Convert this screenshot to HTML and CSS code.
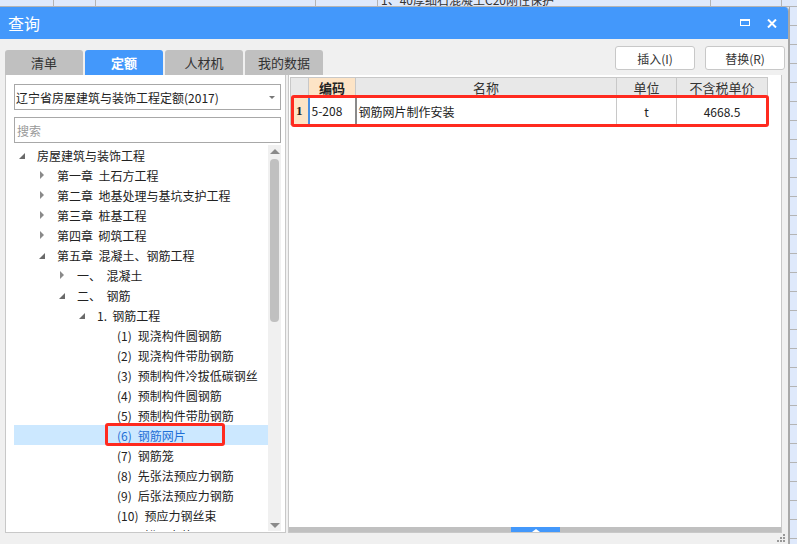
FILE: index.html
```html
<!DOCTYPE html>
<html lang="zh-CN">
<head>
    <meta charset="UTF-8">
    <title>查询</title>
    <link rel="stylesheet" href="styles.css">
</head>
<body>
    <!-- sheet behind the dialog -->
    <div class="sheet-strip">
        <div class="sheet-cell" style="width:54px"></div>
        <div class="sheet-cell" style="width:42px"></div>
        <div class="sheet-cell" style="width:220px"></div>
        <div class="sheet-cell" style="width:62px"></div>
        <div class="sheet-cell sheet-text" style="width:333px">1、40厚细石混凝土C20刚性保护</div>
        <div class="sheet-cell" style="width:71px"></div>
    </div>

    <div class="stage">
        <div class="dialog">
            <div class="titlebar">
                <span class="title">查询</span>
                <div class="title-icons">
                    <span class="ico-max"></span>
                    <svg class="ico-close" width="10" height="9" viewBox="0 0 10 9">
                        <path d="M1 0.5 L9 8.5 M9 0.5 L1 8.5" stroke="#fff" stroke-width="2"/>
                    </svg>
                </div>
            </div>

            <div class="dialog-body">
                <div class="toolbar">
                    <div class="tabs">
                        <div class="tab">清单</div>
                        <div class="tab active">定额</div>
                        <div class="tab">人材机</div>
                        <div class="tab">我的数据</div>
                    </div>
                    <div class="buttons">
                        <button class="btn">插入(I)</button>
                        <button class="btn">替换(R)</button>
                    </div>
                </div>

                <div class="main">
                    <div class="left-panel">
                        <div class="combo">
                            <span>辽宁省房屋建筑与装饰工程定额(2017)</span>
                            <span class="combo-arrow"></span>
                        </div>
                        <div class="search">搜索</div>

                        <div class="tree-wrap">
                            <div class="tree" id="tree"></div>
                            <div class="vscroll">
                                <span class="arr-up"></span>
                                <div class="vthumb"></div>
                                <span class="arr-down"></span>
                            </div>
                        </div>
                    </div>

                    <div class="right-panel">
                        <table class="grid">
                            <thead>
                                <tr>
                                    <th class="rn"></th>
                                    <th class="c-code sel">编码</th>
                                    <th class="c-name">名称</th>
                                    <th class="c-unit">单位</th>
                                    <th class="c-price">不含税单价</th>
                                </tr>
                            </thead>
                            <tbody>
                                <tr>
                                    <td class="rn sel">1</td>
                                    <td class="c-code editing">5-208</td>
                                    <td class="c-name left">钢筋网片制作安装</td>
                                    <td class="c-unit">t</td>
                                    <td class="c-price">4668.5</td>
                                </tr>
                            </tbody>
                        </table>
                        <div class="mark mark-row"></div>

                        <div class="hscroll">
                            <div class="hthumb"><span class="hthumb-arrow"></span></div>
                        </div>
                    </div>
                </div>
            </div>
            <svg class="grip" width="9" height="9" viewBox="0 0 9 9">
                <rect x="6" y="0" width="2" height="2" fill="#999"/>
                <rect x="3" y="3" width="2" height="2" fill="#999"/>
                <rect x="6" y="3" width="2" height="2" fill="#999"/>
                <rect x="0" y="6" width="2" height="2" fill="#999"/>
                <rect x="3" y="6" width="2" height="2" fill="#999"/>
                <rect x="6" y="6" width="2" height="2" fill="#999"/>
            </svg>
        </div>
        <div class="sheet-side"></div>
    </div>

<script>
// tree rows: [level, twisty (o = open, c = closed, - = none), label]
const rows = [
    [0, 'o', '房屋建筑与装饰工程'],
    [1, 'c', '第一章&nbsp;&nbsp;土石方工程'],
    [1, 'c', '第二章&nbsp;&nbsp;地基处理与基坑支护工程'],
    [1, 'c', '第三章&nbsp;&nbsp;桩基工程'],
    [1, 'c', '第四章&nbsp;&nbsp;砌筑工程'],
    [1, 'o', '第五章&nbsp;&nbsp;混凝土、钢筋工程'],
    [2, 'c', '一、&nbsp;&nbsp;混凝土'],
    [2, 'o', '二、&nbsp;&nbsp;钢筋'],
    [3, 'o', '1.&nbsp;&nbsp;钢筋工程'],
    [4, '-', '<span class="num">(1)</span>现浇构件圆钢筋'],
    [4, '-', '<span class="num">(2)</span>现浇构件带肋钢筋'],
    [4, '-', '<span class="num">(3)</span>预制构件冷拔低碳钢丝'],
    [4, '-', '<span class="num">(4)</span>预制构件圆钢筋'],
    [4, '-', '<span class="num">(5)</span>预制构件带肋钢筋'],
    [4, '-', '<span class="num">(6)</span>钢筋网片', true],
    [4, '-', '<span class="num">(7)</span>钢筋笼'],
    [4, '-', '<span class="num">(8)</span>先张法预应力钢筋'],
    [4, '-', '<span class="num">(9)</span>后张法预应力钢筋'],
    [4, '-', '<span class="num">(10)</span>预应力钢丝束'],
    [4, '-', '<span class="num">(11)</span>锚具安装']
];

const tree = document.getElementById('tree');
let html = '';
rows.forEach(r => {
    const twisty = r[1] === 'o' ? 'open' : (r[1] === 'c' ? 'closed' : '');
    html += `<div class="node${r[3] ? ' selected' : ''}" style="padding-left:${r[0] * 20}px">
        <span class="twisty ${twisty}"></span>
        <span class="label">${r[2]}${r[3] ? '<span class="mark mark-node"></span>' : ''}</span>
    </div>`;
});
tree.innerHTML = html;
</script>
</body>
</html>
```

FILE: styles.css
```css
* {
    box-sizing: border-box;
}

body {
    margin: 0;
    width: 797px;
    height: 544px;
    overflow: hidden;
    background-color: #dfe9fb;
    font-family: "Noto Sans CJK SC", "Liberation Sans", sans-serif;
    font-size: 12px;
    color: #222;
}

/* sheet behind */
.sheet-strip {
    display: flex;
    height: 7px;
    border-bottom: 1px solid #b4b4b4;
    overflow: hidden;
}

.sheet-cell {
    height: 7px;
    border-right: 1px solid #b4b4b4;
    flex-shrink: 0;
}

.sheet-text {
    padding-left: 3px;
    line-height: 12px;
    margin-top: -6px;
    height: 13px;
    color: #333;
}

.stage {
    display: flex;
}

.sheet-side {
    flex: 1;
    background: repeating-linear-gradient(#dfe9fb 0 18px, #b4b4b4 18px 19px);
    border-left: 1px solid #a8a8a8;
}

/* dialog */
.dialog {
    width: 789px;
    height: 537px;
    position: relative;
    background-color: #f0f0f0;
    border-right: 1px solid #a8a8a8;
    border-top-right-radius: 4px;
    overflow: hidden;
    display: flex;
    flex-direction: column;
}

.titlebar {
    height: 32px;
    background-color: #4398fb;
    display: flex;
    align-items: center;
    justify-content: space-between;
    padding: 0 11px 0 8px;
    flex-shrink: 0;
}

.title {
    color: #fff;
    font-size: 16px;
}

.title-icons {
    display: flex;
    align-items: center;
    gap: 17px;
}

.ico-max {
    width: 10px;
    height: 7px;
    border: 1px solid #fff;
    border-top-width: 2px;
    margin-top: -1px;
}

.dialog-body {
    flex: 1;
    min-height: 0;
    display: flex;
    flex-direction: column;
    padding: 0 6px 11px 5px;
}

.grip {
    position: absolute;
    right: 2px;
    bottom: 1px;
}

.toolbar {
    height: 36px;
    display: flex;
    justify-content: space-between;
    flex-shrink: 0;
}

.tabs {
    display: flex;
    align-items: flex-end;
    gap: 2px;
}

.tab {
    width: 78px;
    height: 25px;
    background-color: #c0c0c0;
    border-radius: 3px 3px 0 0;
    text-align: center;
    line-height: 25px;
    font-size: 13px;
    color: #333;
}

.tab.active {
    background-color: #4398fb;
    color: #fff;
    font-weight: bold;
}

.buttons {
    display: flex;
    gap: 10px;
    padding-top: 7px;
    margin-right: -3px;
}

.btn {
    width: 80px;
    height: 24px;
    background: #fff;
    border: 1px solid #c8c8c8;
    border-radius: 3px;
    font-family: inherit;
    font-size: 12px;
    color: #333;
    padding: 0;
}

.main {
    flex: 1;
    min-height: 0;
    display: flex;
    gap: 2px;
}

/* left */
.left-panel {
    width: 281px;
    min-height: 0;
    background: #fff;
    border: 1px solid #c8c8c8;
    border-top: none;
    padding: 9px 4px 1px 8px;
    display: flex;
    flex-direction: column;
}

.combo, .search {
    height: 26px;
    flex-shrink: 0;
    border: 1px solid #a8a8a8;
    display: flex;
    align-items: center;
    padding-left: 1px;
    font-size: 12px;
}

.combo {
    justify-content: space-between;
    padding-right: 5px;
    color: #222;
}

.combo-arrow {
    width: 0;
    height: 0;
    border-left: 3px solid transparent;
    border-right: 3px solid transparent;
    border-top: 3px solid #777;
}

.search {
    margin-top: 7px;
    color: #999;
    padding-left: 2px;
}

.tree-wrap {
    flex: 1;
    min-height: 0;
    display: flex;
    margin-top: 2px;
    overflow: hidden;
}

.tree {
    flex: 1;
    overflow: hidden;
}

.node {
    height: 20px;
    display: flex;
    align-items: center;
    white-space: nowrap;
}

.node.selected {
    background-color: #cce8ff;
    color: #1f6fd6;
}

.twisty {
    width: 23px;
    height: 20px;
    position: relative;
    flex-shrink: 0;
}

.twisty.closed::before {
    content: "";
    position: absolute;
    left: 6px;
    top: 6px;
    border-top: 4px solid transparent;
    border-bottom: 4px solid transparent;
    border-left: 4px solid #8a8a8a;
}

.twisty.open::before {
    content: "";
    position: absolute;
    left: 5px;
    top: 8px;
    border-left: 6px solid transparent;
    border-bottom: 6px solid #6a6a6a;
}

.label {
    position: relative;
}

.num {
    margin-right: 6px;
}

.vscroll {
    width: 13px;
    background: #f0f0f0;
    display: flex;
    flex-direction: column;
    align-items: center;
    padding: 4px 0 3px;
}

.arr-up, .arr-down {
    width: 0;
    height: 0;
    border-left: 5px solid transparent;
    border-right: 5px solid transparent;
}

.arr-up {
    border-bottom: 5px solid #8a8a8a;
}

.arr-down {
    border-top: 5px solid #8a8a8a;
    margin-top: auto;
}

.vthumb {
    width: 9px;
    height: 163px;
    margin-top: 5px;
    background: #c0c0c0;
    border-radius: 4px;
}

/* right */
.right-panel {
    flex: 1;
    min-height: 0;
    background: #fff;
    border: 1px solid #c8c8c8;
    border-top: none;
    position: relative;
    padding: 2px 1px 0 1px;
    display: flex;
    flex-direction: column;
}

.grid {
    border-collapse: collapse;
    table-layout: fixed;
    width: 477px;
    font-size: 12px;
}

.grid th {
    height: 20px;
    background: #e8e8e8;
    border: 1px solid #c8c8c8;
    font-weight: normal;
    color: #333;
    padding: 0;
    font-size: 13px;
}

.grid th.sel {
    background: #fde4c6;
    color: #222;
    font-weight: bold;
}

.grid td {
    height: 27px;
    border: 1px solid #c8c8c8;
    text-align: center;
    padding: 0 2px;
    white-space: nowrap;
}

.grid td.left {
    text-align: left;
}

.rn {
    width: 18px;
}

.grid td.rn {
    background: #fde4c6;
    font-family: "Liberation Serif", serif;
    font-weight: bold;
    font-size: 13px;
}

.c-code {
    width: 47px;
}

.grid td.editing {
    text-align: left;
    border-left: 2px solid #4a90e2;
    border-right: 2px solid #8a8a8a;
    border-bottom: 2px solid #8a8a8a;
}

.c-name {
    width: 261px;
}

.c-unit {
    width: 60px;
}

.c-price {
    width: 91px;
}

.hscroll {
    margin-top: auto;
    height: 5px;
    flex-shrink: 0;
    background: #c0c0c0;
    margin-left: -1px;
    margin-right: -1px;
    padding-left: 222px;
}

.hthumb {
    width: 49px;
    height: 5px;
    background: #4398fb;
    display: flex;
    justify-content: center;
    align-items: flex-end;
}

.hthumb-arrow {
    border-left: 4px solid transparent;
    border-right: 4px solid transparent;
    border-bottom: 3px solid #fff;
}

/* red annotation boxes */
.mark {
    position: absolute;
    border: 3px solid #ff2a1f;
    border-radius: 3px;
    pointer-events: none;
}

.mark-row {
    left: 2px;
    top: 20px;
    width: 478px;
    height: 32px;
}

.mark-node {
    left: -12px;
    top: -4px;
    width: 120px;
    height: 23px;
}
```
